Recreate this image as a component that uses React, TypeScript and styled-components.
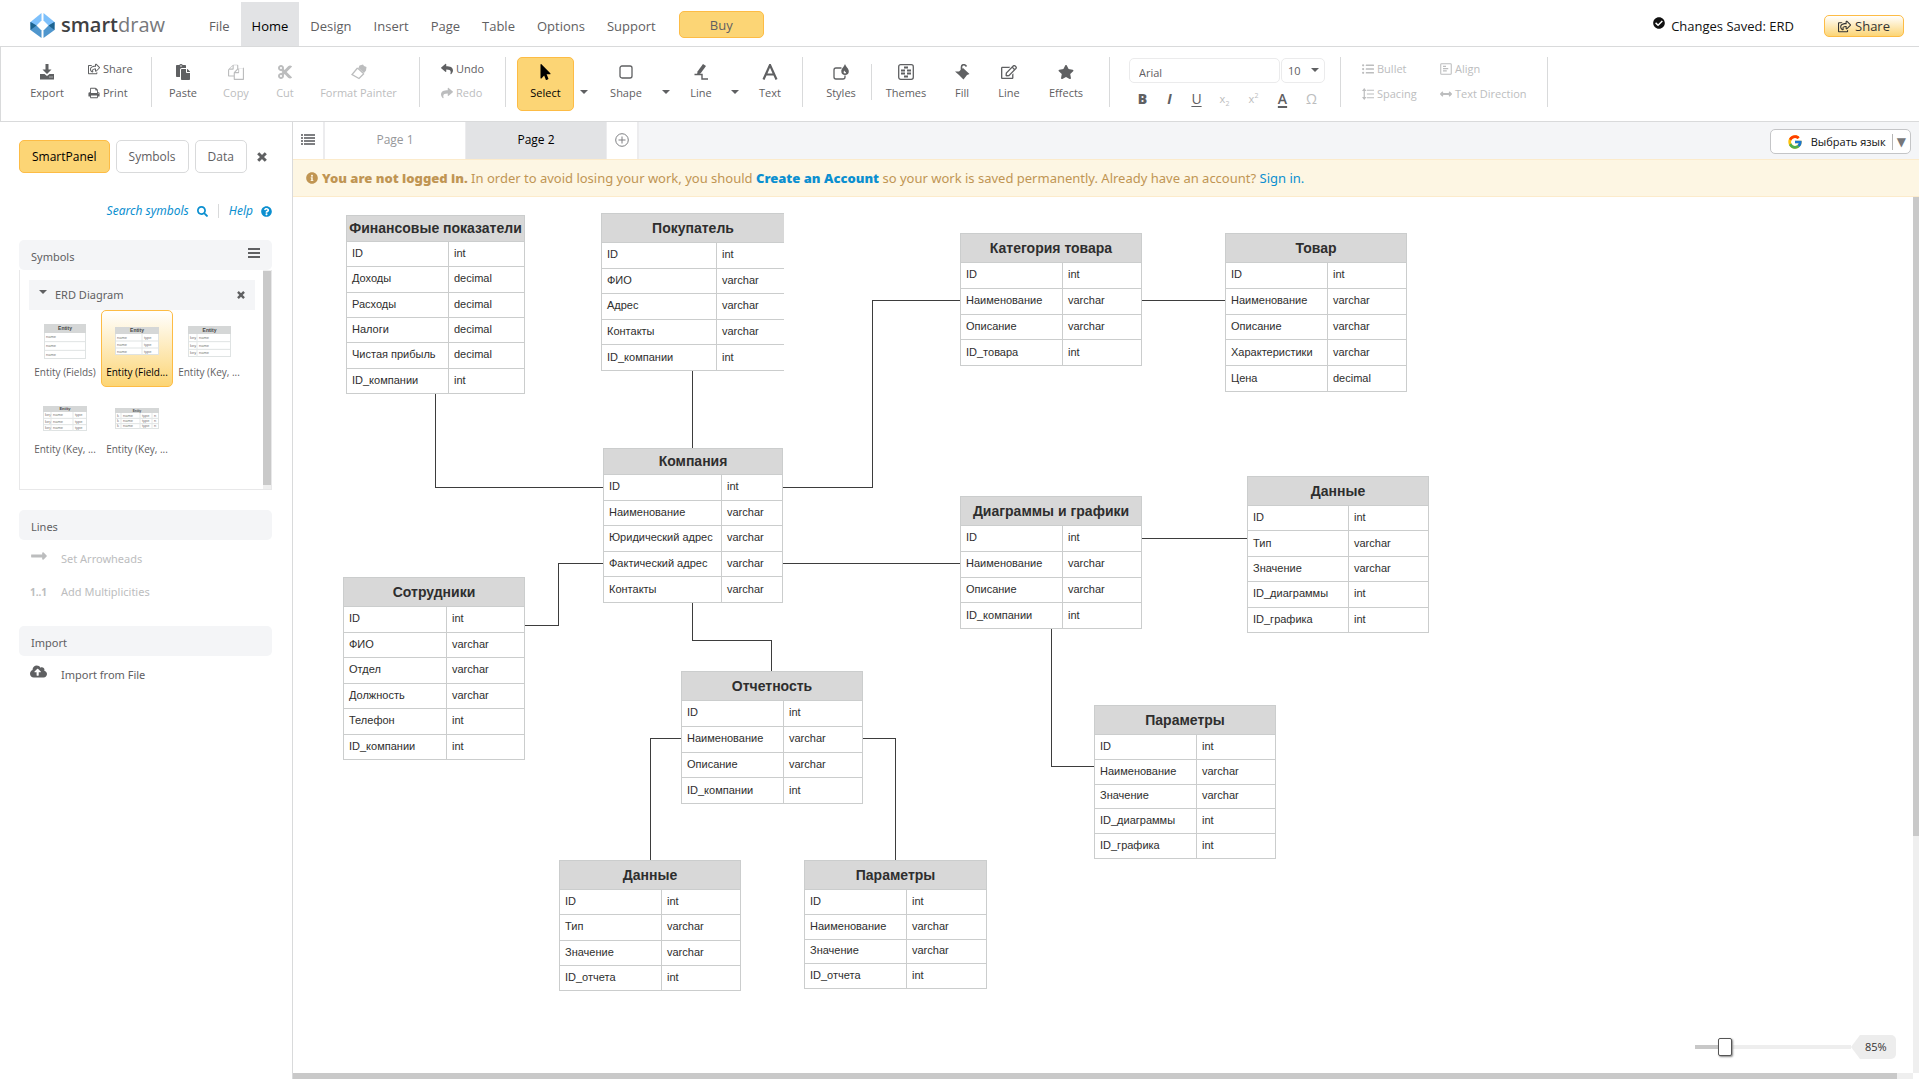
import React, { useState } from "react";
import styled, { createGlobalStyle, css } from "styled-components";
import {
  FaArrowsAltH, FaCheckCircle, FaCloudUploadAlt, FaCut, FaInfoCircle, FaListUl,
  FaLongArrowAltRight, FaMousePointer, FaPaste, FaQuestionCircle, FaRegEdit,
  FaRegShareSquare, FaReply, FaSearch, FaShare, FaStar,
} from "react-icons/fa";
import { FcGoogle } from "react-icons/fc";

const c = {
  text: "#5f6062",
  muted: "#bcbdbe",
  line: "#d9dadb",
  soft: "#f4f5f7",
  active: "#e2e3e5",
  gold: "#fcd575",
  goldEdge: "#fdbc45",
  link: "#0b8fd0",
};

const Global = createGlobalStyle`
  *, *::before, *::after { box-sizing: border-box; }
  body { margin: 0; background: #fff; color: ${c.text}; font: 11px/16px "Open Sans", "Noto Sans", sans-serif; }
  button, input, select { font: inherit; color: inherit; margin: 0; }
  button { background: none; border: 0; padding: 0; cursor: pointer; }
  a { color: ${c.link}; text-decoration: none; }
`;

const Shell = styled.div`
  display: flex;
  flex-direction: column;
  height: 100vh;
`;

/* ---------- top bar ---------- */
const TopBar = styled.header`
  display: flex;
  align-items: flex-start;
  height: 47px;
  padding: 2px 15px 0 30px;
  border-bottom: 1px solid ${c.line};
  font-size: 13px;
  line-height: 18px;
`;
const Logo = styled.a`
  display: flex;
  align-items: center;
  gap: 6px;
  width: 168px;
  height: 46px;
  font-size: 20px;
  line-height: 24px;
  color: #77787b;
  b { font-weight: 600; color: #3f4042; }
`;
const Menu = styled.nav`
  display: flex;
`;
const MenuItem = styled.button<{ $on?: boolean }>`
  height: 44px;
  padding: 4px 11px 0;
  ${(p) => p.$on && css`background: ${c.active}; color: #000;`}
`;
const Buy = styled.button`
  width: 85px;
  height: 27px;
  margin: 9px 0 0 12px;
  border: 1px solid ${c.goldEdge};
  border-radius: 5px;
  background: ${c.gold};
`;
const Saved = styled.div`
  display: flex;
  align-items: center;
  gap: 6px;
  margin: 15px 30px 0 auto;
  color: #111;
  svg { margin-bottom: 6px; }
`;
const ShareButton = styled.button`
  display: flex;
  align-items: center;
  justify-content: center;
  gap: 4px;
  width: 80px;
  height: 22px;
  margin-top: 13px;
  border: 1px solid ${c.goldEdge};
  border-radius: 5px;
  background: linear-gradient(#fff, ${c.gold});
  color: #333;
`;

/* ---------- toolbar ---------- */
const Toolbar = styled.div`
  display: flex;
  height: 75px;
  padding: 10px 0 0 14px;
  border-left: 1px solid ${c.line};
  border-bottom: 1px solid ${c.line};
`;
const Tool = styled.button<{ $w: number; $off?: boolean; $on?: boolean }>`
  display: flex;
  flex-direction: column;
  align-items: center;
  flex: none;
  width: ${(p) => p.$w}px;
  height: 54px;
  padding-top: 7px;
  color: ${(p) => (p.$off ? c.muted : c.text)};
  white-space: nowrap;
  svg { height: 16px; margin-bottom: 5px; }
  ${(p) => p.$on && css`
    padding-top: 6px;
    border: 1px solid ${c.goldEdge};
    border-radius: 5px;
    background: ${c.gold};
    color: #000;
  `}
`;
const CaretButton = styled.button<{ $w: number }>`
  flex: none;
  display: flex;
  justify-content: center;
  align-items: center;
  width: ${(p) => p.$w}px;
  height: 54px;
  padding-top: 16px;
`;
const Caret = styled.span`
  border: 4px solid transparent;
  border-top-color: currentColor;
  border-bottom: 0;
`;
const Rule = styled.span<{ $before?: number; $after?: number; $short?: boolean }>`
  flex: none;
  width: 1px;
  height: ${(p) => (p.$short ? 36 : 50)}px;
  margin: ${(p) => (p.$short ? 7 : 0)}px ${(p) => p.$after ?? 0}px 0 ${(p) => p.$before ?? 0}px;
  background: ${c.line};
`;
const Stack = styled.div<{ $w: number; $pad: number }>`
  flex: none;
  display: flex;
  flex-direction: column;
  gap: 8px;
  width: ${(p) => p.$w}px;
  padding: 4px 0 0 ${(p) => p.$pad}px;
`;
const SmallTool = styled.button<{ $off?: boolean }>`
  display: flex;
  align-items: center;
  gap: 3px;
  height: 16px;
  color: ${(p) => (p.$off ? c.muted : c.text)};
  white-space: nowrap;
  svg { width: 12px; height: 12px; }
`;
const ParagraphTools = styled.div`
  display: grid;
  grid-template-columns: 78px 107px;
  grid-auto-rows: 16px;
  row-gap: 9px;
  padding-top: 4px;
`;
const FontBlock = styled.div`
  width: 196px;
`;
const FontRow = styled.div`
  display: flex;
  gap: 1px;
  padding-top: 1px;
`;
const FontInput = styled.input`
  width: 151px;
  height: 25px;
  padding: 4px 9px 0;
  border: 1px solid #ebebec;
  border-radius: 5px;
`;
const SizeBox = styled.label`
  position: relative;
  width: 44px;
  height: 25px;
  ${Caret} { position: absolute; right: 6px; top: 10px; pointer-events: none; }
`;
const SizeSelect = styled.select`
  appearance: none;
  width: 100%;
  height: 100%;
  padding: 0 6px;
  border: 1px solid #ebebec;
  border-radius: 5px;
  background: none;
`;
const StyleRow = styled.div`
  display: grid;
  grid-template-columns: repeat(3, 27px) repeat(4, 29px);
  height: 24px;
  margin-top: 4px;
`;
const StyleButton = styled.button<{ $off?: boolean; $kind?: "bold" | "italic" | "under" | "color" | "omega" }>`
  color: ${(p) => (p.$off ? c.muted : c.text)};
  font-size: ${(p) => (p.$kind ? 14 : 11)}px;
  line-height: 24px;
  ${(p) => p.$kind === "bold" && css`font-weight: 800;`}
  ${(p) => p.$kind === "italic" && css`font-style: italic; font-weight: 700;`}
  ${(p) => p.$kind === "under" && css`text-decoration: underline; text-underline-offset: 2px;`}
  ${(p) => p.$kind === "color" && css`font-weight: 600; text-decoration: underline 2px; text-underline-offset: 2px;`}
  sub, sup { font-size: 7px; line-height: 0; }
`;

/* ---------- side panel ---------- */
const Body = styled.div`
  flex: 1;
  display: flex;
  min-height: 0;
`;
const Side = styled.aside`
  flex: none;
  width: 293px;
  padding: 18px 20px 0 19px;
  border-right: 1px solid ${c.line};
  font-family: "Noto Sans", "Open Sans", sans-serif;
`;
const SideTabs = styled.div`
  display: flex;
  align-items: center;
  gap: 6px;
  margin-bottom: 29px;
  font-family: "Open Sans", sans-serif;
`;
const SideTab = styled.button<{ $on?: boolean }>`
  height: 33px;
  padding: 0 12px;
  border: 1px solid ${(p) => (p.$on ? c.goldEdge : c.line)};
  border-radius: 5px;
  background: ${(p) => (p.$on ? c.gold : "#fff")};
  color: ${(p) => (p.$on ? "#000" : c.text)};
  font-size: 12px;
`;
const CloseButton = styled.button`
  display: flex;
  margin-left: 4px;
`;
const SearchRow = styled.div`
  display: flex;
  align-items: center;
  justify-content: flex-end;
  height: 18px;
  margin-bottom: 20px;
  font-size: 12px;
  font-style: italic;
  a { display: flex; align-items: center; gap: 8px; }
  a:first-child { margin-right: 10px; }
  a:last-child { padding-left: 10px; border-left: 1px solid ${c.line}; line-height: 14px; }
`;
const SideHead = styled.h2`
  display: flex;
  align-items: center;
  justify-content: space-between;
  height: 30px;
  margin: 0;
  padding: 4px 12px 0;
  border-radius: 5px;
  background: ${c.soft};
  font-size: 11px;
  font-weight: 400;
  svg { margin-bottom: 8px; }
`;
const Library = styled.div`
  display: flex;
  height: 220px;
  margin-bottom: 20px;
  border: 1px solid #e8e8e9;
  border-top: 0;
`;
const LibraryBody = styled.div`
  flex: 1;
  padding: 10px 8px 0 9px;
`;
const LibraryHead = styled.div`
  display: flex;
  align-items: center;
  gap: 8px;
  height: 30px;
  padding: 0 10px;
  background: ${c.soft};
  span + span { flex: 1; }
  ${Caret} { margin-bottom: 6px; }
`;
const BarTrack = styled.div`
  width: 8px;
  padding-top: 1px;
  background: #efefef;
`;
const BarThumb = styled.div<{ $size: string; $side?: boolean }>`
  ${(p) => (p.$side ? `width: ${p.$size}; height: 100%;` : `height: ${p.$size};`)}
  background: #c9c9c9;
`;
const Tiles = styled.div`
  display: grid;
  grid-template-columns: repeat(3, 72px);
`;
const Tile = styled.button<{ $on?: boolean }>`
  display: flex;
  flex-direction: column;
  align-items: center;
  height: 77px;
  border: 1px solid ${(p) => (p.$on ? c.goldEdge : "transparent")};
  border-radius: 5px;
  background: ${(p) => (p.$on ? `linear-gradient(#fff, ${c.gold})` : "none")};
  color: ${(p) => (p.$on ? "#000" : c.text)};
  font-family: "Open Sans", sans-serif;
  font-size: 10px;
  line-height: 14px;
  white-space: nowrap;
`;
const ThumbBox = styled.span`
  display: flex;
  align-items: center;
  height: 54px;
  padding-top: 6px;
`;
const Actions = styled.div`
  padding: 2px 11px 18px;
`;
const Action = styled.button<{ $off?: boolean }>`
  display: grid;
  grid-template-columns: 31px auto;
  align-items: center;
  height: 33px;
  text-align: left;
  color: ${(p) => (p.$off ? c.muted : c.text)};
  svg { margin-bottom: 6px; }
  b { font-size: 10px; }
`;

/* ---------- workspace ---------- */
const Work = styled.main`
  flex: 1;
  display: flex;
  flex-direction: column;
  min-width: 0;
`;
const Tabs = styled.div`
  display: flex;
  height: 37px;
  background: ${c.soft};
`;
const Tab = styled.button<{ $on?: boolean }>`
  width: 141px;
  padding-bottom: 2px;
  border-right: 1px solid #ececee;
  background: ${(p) => (p.$on ? c.active : "#fff")};
  color: ${(p) => (p.$on ? "#000" : "#96979a")};
  font-size: 12px;
`;
const TabIcon = styled.button`
  display: flex;
  align-items: center;
  justify-content: center;
  width: 32px;
  padding-bottom: 2px;
  border-right: 2px solid #ececee;
  background: #fff;
  color: #7e7f82;
`;
const Language = styled.button`
  display: flex;
  align-items: center;
  justify-content: flex-end;
  width: 141px;
  height: 25px;
  margin: 7px 8px 0 auto;
  padding: 0 4px 0 0;
  border: 1px solid #c4c5c7;
  border-radius: 5px;
  background: #fff;
  color: #111;
  svg { margin-right: 8px; }
  i { height: 16px; margin-left: 6px; padding-left: 4px; border-left: 1px solid #b5b5b5; color: #76777a; font: 12px/16px "DejaVu Sans", sans-serif; }
`;
const Banner = styled.p`
  display: flex;
  align-items: center;
  gap: 4px;
  height: 38px;
  margin: 0;
  padding: 0 13px;
  border: solid #fcebcb;
  border-width: 1px 0;
  background: #fdf6e3;
  color: #c09553;
  font-family: "Noto Sans", "Open Sans", sans-serif;
  font-size: 13px;
  white-space: pre;
  strong { font-weight: 900; }
`;
const Stage = styled.div`
  position: relative;
  flex: 1;
  display: grid;
  grid-template: 1fr 6px / 1fr 6px;
  min-height: 0;
`;
const Canvas = styled.div`
  position: relative;
  overflow: hidden;
  background: #fff;
`;
const Scroll = styled.div`
  background: #efefef;
`;
const Wires = styled.svg`
  position: absolute;
  inset: 0;
  width: 100%;
  height: 100%;
  fill: none;
  stroke: #3d3d3d;
  shape-rendering: crispEdges;
`;
const EntityTable = styled.table<{ $x: number; $y: number; $w: number; $h: number; $open?: boolean }>`
  position: absolute;
  left: ${(p) => p.$x}px;
  top: ${(p) => p.$y}px;
  width: ${(p) => p.$w}px;
  height: ${(p) => p.$h}px;
  border-collapse: collapse;
  table-layout: fixed;
  background: #fff;
  color: #2e2e2e;
  font: 11px/14px "Liberation Sans", Arial, sans-serif;
  th, td { padding: 0 0 2px 5px; border: 1px solid #cbcdcd; text-align: left; white-space: nowrap; }
  ${(p) => p.$open && css`th, td:last-child { border-right: 0; }`}
`;
const EntityTitle = styled.th<{ $h: number }>`
  && { height: ${(p) => p.$h}px; padding: 0 0 1px; background: #d8d8d8; text-align: center; font-size: 14px; line-height: 16px; }
`;
const Zoom = styled.div`
  position: absolute;
  right: 23px;
  bottom: 20px;
  display: flex;
  align-items: center;
`;
const ZoomRange = styled.input`
  appearance: none;
  width: 156px;
  height: 18px;
  background: linear-gradient(to right, #c8c8c8 24px, #eee 24px) center / 100% 4px no-repeat;
  &::-webkit-slider-thumb {
    appearance: none;
    width: 14px;
    height: 18px;
    border: 1px solid #555;
    border-radius: 2px;
    background: #fff;
    box-shadow: 1px 1px 2px #888;
  }
`;
const ZoomValue = styled.output`
  width: 45px;
  padding: 0 0 0 14px;
  border-radius: 0 5px 5px 0;
  background: #ededed;
  clip-path: polygon(0 50%, 20% 0, 100% 0, 100% 100%, 20% 100%);
  color: #333;
  font-size: 11px;
  line-height: 24px;
`;

/* ---------- drawings ---------- */
const svg = { width: 16, height: 16, viewBox: "0 0 16 16", fill: "currentColor" };

const LogoMark = () => (
  <svg width="25" height="25" viewBox="0 0 25 25">
    <path d="M11.500 0v7.500L6.500 12.500H.500V9z" fill="#7dc0fb" />
    <path d="M13.500 0v7.500l5 5h6V9z" fill="#7dc0fb" />
    <path d="M.500 9v8l11 8v-7.500l-5-5z" fill="#4f96cd" />
    <path d="M24.500 9v8l-11 8v-7.500l5-5z" fill="#4f96cd" />
    <path d="M.500 9l6 3.500L.500 17zM24.500 9l-6 3.500 6 4.500z" fill="#1c6390" />
  </svg>
);
const ExportIcon = () => (
  <svg {...svg}><path d="M6.500 0h3v5.500h3L8 10 3.500 5.500h3zM1 10h4.500l2.500 2 2.500-2H15v5.500H1zM10.500 12.500v1h1v-1zM12.500 12.500v1h1v-1z" fillRule="evenodd" /></svg>
);
const PrintIcon = () => (
  <svg {...svg} viewBox="0 0 1792 1792"><path d="M448 1536h896v-256H448v256zm0-640h896V512h-160q-40 0-68-28t-28-68V256H448v640zm1152 64q0-26-19-45t-45-19-45 19-19 45 19 45 45 19 45-19 19-45zm128 0v416q0 13-9.500 22.500t-22.500 9.500h-224v160q0 40-28 68t-68 28H416q-40 0-68-28t-28-68v-160H96q-13 0-22.500-9.500T64 1376V960q0-79 56.500-135.500T256 768h64V224q0-40 28-68t68-28h672q40 0 88 20t76 48l152 152q28 28 48 76t20 88v256h64q79 0 135.500 56.500T1728 960z" /></svg>
);
const CopyIcon = () => (
  <svg {...svg} viewBox="0 0 1792 1792"><path d="M1696 384q40 0 68 28t28 68v1216q0 40-28 68t-68 28H736q-40 0-68-28t-28-68v-288H96q-40 0-68-28t-28-68V736q0-40 20-88t48-76l408-408q28-28 76-48t88-20h416q40 0 68 28t28 68v328q68-40 128-40h416zm-544 213L853 896h299V597zM512 213L213 512h299V213zm196 647l316-316V128H640v416q0 40-28 68t-68 28H128v640h512v-256q0-40 20-88t48-76zm956 804V512h-416v416q0 40-28 68t-68 28H768v640h896z" /></svg>
);
const PainterIcon = () => (
  <svg {...svg}><path d="M8.500 1.500L12 .500l1 1.500 2.500 1-.5 3.500-2 2.500-5.500-5z" /><path d="M6.500 4L1 10.500 8 14.500 13 9.500 M6.500 4L12.500 9.500" fill="none" stroke="currentColor" strokeWidth="1.300" /></svg>
);
const ShapeIcon = () => (
  <svg {...svg}><rect x="2" y="2" width="12" height="12" rx="2" fill="none" stroke="currentColor" strokeWidth="1.300" /></svg>
);
const PencilLineIcon = () => (
  <svg {...svg}><path d="M10 0l3 2-5.500 7.500L4 11l.5-3.500z" /><path d="M1.500 10.500H9V15h6" fill="none" stroke="currentColor" strokeWidth="1.400" /></svg>
);
const LetterIcon = () => (
  <svg {...svg}><path d="M1.500 15.500L8 1l6.500 14.500M4 10.500h8" fill="none" stroke="currentColor" strokeWidth="2.200" /></svg>
);
const StylesIcon = () => (
  <svg {...svg}><path d="M8.500 4H3a2 2 0 0 0-2 2v7a2 2 0 0 0 2 2h7a2 2 0 0 0 2-2v-1.500" fill="none" stroke="currentColor" strokeWidth="1.300" /><path d="M12 0c1 3 3.800 4.500 3.800 7.300a3.700 3.700 0 0 1-7.500 0C8.300 4.500 11 3 12 0zm-.5 6.500c-1.500 1-1 3 .7 3 1 0 1-1.200.3-1.500s-.8-.8-1-1.500z" fillRule="evenodd" /></svg>
);
const ThemesIcon = () => (
  <svg {...svg}><rect x=".7" y=".7" width="14.600" height="14.600" rx="2" fill="none" stroke="currentColor" strokeWidth="1.300" /><path d="M6 2.500h4v2H6zM3 5.500h4v2H3zM9 5.500h4v2H9zM3 8.500h4v2H3zM9 8.500h4v2H9zM6 11.500h4v2H6z" /></svg>
);
const FillIcon = () => (
  <svg {...svg}><path d="M1 7.500h4L9 4l6.500 6-2.500 1-3.500 4.500L5 11z" /><path d="M12.500 2.500C11 0 7.500 0 7.500 3v4.500" fill="none" stroke="currentColor" strokeWidth="1.600" /></svg>
);
const AlignIcon = () => (
  <svg {...svg}><rect x="1" y="1" width="14" height="14" rx="1" fill="none" stroke="currentColor" strokeWidth="1.400" /><path d="M4 4.500h4M4 7.500h7M4 10.500h5" stroke="currentColor" strokeWidth="1.600" /></svg>
);
const SpacingIcon = () => (
  <svg {...svg}><path d="M3 2.500v11M6.500 3H16M6.500 8H16M6.500 13H16" stroke="currentColor" strokeWidth="1.600" /><path d="M0 4l3-4 3 4zM0 12l3 4 3-4z" /></svg>
);
const PageListIcon = () => (
  <svg width="14" height="11" viewBox="0 0 14 11" fill="currentColor"><path d="M0 0h2v2H0zM3 0h11v2H3zM0 3h2v2H0zM3 3h11v2H3zM0 6h2v2H0zM3 6h11v2H3zM0 9h2v2H0zM3 9h11v2H3z" /></svg>
);
const CrossIcon = ({ size }: { size: number }) => (
  <svg width={size} height={size} viewBox="0 0 10 10" stroke="currentColor" strokeWidth="3"><path d="M1.200 1.200l7.600 7.600M8.800 1.200L1.200 8.800" /></svg>
);
const PlusIcon = () => (
  <svg width="14" height="14" viewBox="0 0 14 14" fill="none" stroke="currentColor"><circle cx="7" cy="7" r="6.300" /><path d="M7 3.500v7M3.500 7h7" /></svg>
);
const MenuIcon = () => (
  <svg width="12" height="10" viewBox="0 0 12 10" fill="currentColor"><path d="M0 0h12v2H0zM0 4h12v2H0zM0 8h12v2H0z" /></svg>
);

type ThumbProps = { w: number; h: number; head: number; cols: { x: number; label: string }[] };
const EntityThumb = ({ w, h, head, cols }: ThumbProps) => {
  const row = (h - head) / 3;
  const titleSize = Math.min(5, head - 2);
  return (
    <svg width={w} height={h} viewBox={`0 0 ${w} ${h}`} fontFamily="Liberation Sans, sans-serif" fontSize="4" fill="#777">
      <rect x=".5" y=".5" width={w - 1} height={h - 1} fill="#fff" stroke="#dfe3e3" />
      <rect width={w} height={head} fill="#d5d7d7" />
      <text x={w / 2} y={head / 2 + titleSize / 3} textAnchor="middle" fontWeight="700" fontSize={titleSize} fill="#444">Entity</text>
      {[0, 1, 2].map((r) => (
        <g key={r}>
          {r > 0 && <path d={`M0 ${head + row * r}H${w}`} stroke="#dfe3e3" />}
          {cols.map((col) => (
            <text key={col.x} x={col.x + 2} y={head + row * (r + 1) - row / 2 + 1}>{col.label}</text>
          ))}
        </g>
      ))}
      {cols.slice(1).map((col) => <path key={col.x} d={`M${col.x} ${head}V${h}`} stroke="#e4e7e7" />)}
    </svg>
  );
};

/* ---------- data ---------- */
const thumbs: { label: string; on?: boolean; thumb: ThumbProps }[] = [
  { label: "Entity (Fields)", thumb: { w: 42, h: 35, head: 9, cols: [{ x: 0, label: "name" }] } },
  { label: "Entity (Field...", on: true, thumb: { w: 44, h: 28, head: 7, cols: [{ x: 0, label: "name" }, { x: 27, label: "type" }] } },
  { label: "Entity (Key, ...", thumb: { w: 43, h: 31, head: 8, cols: [{ x: 0, label: "key" }, { x: 9, label: "name" }] } },
  { label: "Entity (Key, ...", thumb: { w: 44, h: 25, head: 6, cols: [{ x: 0, label: "key" }, { x: 8, label: "name" }, { x: 30, label: "type" }] } },
  { label: "Entity (Key, ...", thumb: { w: 44, h: 21, head: 5, cols: [{ x: 0, label: "k" }, { x: 6, label: "name" }, { x: 25, label: "type" }, { x: 37, label: "n" }] } },
];

type Entity = { title: string; x: number; y: number; w: number; h: number; head: number; split: number; open?: boolean; rows: [string, string][] };
const entities: Entity[] = [
  { title: "Финансовые показатели", x: 53, y: 18, w: 179, h: 179, head: 26, split: 102, rows: [["ID", "int"], ["Доходы", "decimal"], ["Расходы", "decimal"], ["Налоги", "decimal"], ["Чистая прибыль", "decimal"], ["ID_компании", "int"]] },
  { title: "Покупатель", x: 308, y: 16, w: 183, h: 158, head: 29, split: 115, open: true, rows: [["ID", "int"], ["ФИО", "varchar"], ["Адрес", "varchar"], ["Контакты", "varchar"], ["ID_компании", "int"]] },
  { title: "Категория товара", x: 667, y: 36, w: 182, h: 133, head: 29, split: 102, rows: [["ID", "int"], ["Наименование", "varchar"], ["Описание", "varchar"], ["ID_товара", "int"]] },
  { title: "Товар", x: 932, y: 36, w: 182, h: 159, head: 29, split: 102, rows: [["ID", "int"], ["Наименование", "varchar"], ["Описание", "varchar"], ["Характеристики", "varchar"], ["Цена", "decimal"]] },
  { title: "Компания", x: 310, y: 251, w: 180, h: 155, head: 26, split: 118, rows: [["ID", "int"], ["Наименование", "varchar"], ["Юридический адрес", "varchar"], ["Фактический адрес", "varchar"], ["Контакты", "varchar"]] },
  { title: "Сотрудники", x: 50, y: 380, w: 182, h: 183, head: 29, split: 103, rows: [["ID", "int"], ["ФИО", "varchar"], ["Отдел", "varchar"], ["Должность", "varchar"], ["Телефон", "int"], ["ID_компании", "int"]] },
  { title: "Отчетность", x: 388, y: 474, w: 182, h: 133, head: 29, split: 102, rows: [["ID", "int"], ["Наименование", "varchar"], ["Описание", "varchar"], ["ID_компании", "int"]] },
  { title: "Данные", x: 266, y: 663, w: 182, h: 131, head: 29, split: 102, rows: [["ID", "int"], ["Тип", "varchar"], ["Значение", "varchar"], ["ID_отчета", "int"]] },
  { title: "Параметры", x: 511, y: 663, w: 183, h: 129, head: 29, split: 102, rows: [["ID", "int"], ["Наименование", "varchar"], ["Значение", "varchar"], ["ID_отчета", "int"]] },
  { title: "Диаграммы и графики", x: 667, y: 299, w: 182, h: 133, head: 29, split: 102, rows: [["ID", "int"], ["Наименование", "varchar"], ["Описание", "varchar"], ["ID_компании", "int"]] },
  { title: "Данные", x: 954, y: 279, w: 182, h: 157, head: 29, split: 101, rows: [["ID", "int"], ["Тип", "varchar"], ["Значение", "varchar"], ["ID_диаграммы", "int"], ["ID_графика", "int"]] },
  { title: "Параметры", x: 801, y: 508, w: 182, h: 154, head: 29, split: 102, rows: [["ID", "int"], ["Наименование", "varchar"], ["Значение", "varchar"], ["ID_диаграммы", "int"], ["ID_графика", "int"]] },
];
const wires =
  "M142 196V290H310 M399 173V251 M490 290H579V103H667 M849 103H932 M310 366H265V428H232 M490 366H667 " +
  "M399 405V443H478V474 M388 541H357V663 M570 541H602V663 M849 341H954 M758 431V569H801";

const menu = ["File", "Home", "Design", "Insert", "Page", "Table", "Options", "Support"];

export default function App() {
  const [zoom, setZoom] = useState(85);
  return (
    <Shell>
      <Global />
      <TopBar>
        <Logo href="#"><LogoMark /><span><b>smart</b>draw</span></Logo>
        <Menu>{menu.map((m) => <MenuItem key={m} $on={m === "Home"}>{m}</MenuItem>)}</Menu>
        <Buy>Buy</Buy>
        <Saved><FaCheckCircle size={12} />Changes Saved: ERD</Saved>
        <ShareButton><FaRegShareSquare size={13} />Share</ShareButton>
      </TopBar>

      <Toolbar>
        <Tool $w={64}><ExportIcon />Export</Tool>
        <Stack $w={72} $pad={9}>
          <SmallTool><FaRegShareSquare />Share</SmallTool>
          <SmallTool><PrintIcon />Print</SmallTool>
        </Stack>
        <Rule />
        <Tool $w={62}><FaPaste size={16} />Paste</Tool>
        <Tool $w={44} $off><CopyIcon />Copy</Tool>
        <Tool $w={54} $off><FaCut size={16} />Cut</Tool>
        <Tool $w={93} $off><PainterIcon />Format Painter</Tool>
        <Rule $before={14} />
        <Stack $w={85} $pad={21}>
          <SmallTool><FaReply />Undo</SmallTool>
          <SmallTool $off><FaShare />Redo</SmallTool>
        </Stack>
        <Rule $after={11} />
        <Tool $w={57} $on><FaMousePointer size={17} />Select</Tool>
        <CaretButton $w={20} aria-label="Select options"><Caret /></CaretButton>
        <Tool $w={64}><ShapeIcon />Shape</Tool>
        <CaretButton $w={16} aria-label="Shape options"><Caret /></CaretButton>
        <Tool $w={54}><PencilLineIcon />Line</Tool>
        <CaretButton $w={14} aria-label="Line options"><Caret /></CaretButton>
        <Tool $w={56}><LetterIcon />Text</Tool>
        <Rule $before={4} $after={8} />
        <Tool $w={60}><StylesIcon />Styles</Tool>
        <Rule $short />
        <Tool $w={68}><ThemesIcon />Themes</Tool>
        <Tool $w={44}><FillIcon />Fill</Tool>
        <Tool $w={50}><FaRegEdit size={16} />Line</Tool>
        <Tool $w={64}><FaStar size={16} />Effects</Tool>
        <Rule $before={11} $after={19} />
        <FontBlock>
          <FontRow>
            <FontInput aria-label="Font" defaultValue="Arial" />
            <SizeBox>
              <SizeSelect aria-label="Font size" defaultValue="10"><option>10</option><option>12</option></SizeSelect>
              <Caret />
            </SizeBox>
          </FontRow>
          <StyleRow>
            <StyleButton $kind="bold">B</StyleButton>
            <StyleButton $kind="italic">I</StyleButton>
            <StyleButton $kind="under">U</StyleButton>
            <StyleButton $off>x<sub>2</sub></StyleButton>
            <StyleButton $off>x<sup>2</sup></StyleButton>
            <StyleButton $kind="color">A</StyleButton>
            <StyleButton $kind="omega" $off>Ω</StyleButton>
          </StyleRow>
        </FontBlock>
        <Rule $before={15} $after={21} />
        <ParagraphTools>
          <SmallTool $off><FaListUl />Bullet</SmallTool>
          <SmallTool $off><AlignIcon />Align</SmallTool>
          <SmallTool $off><SpacingIcon />Spacing</SmallTool>
          <SmallTool $off><FaArrowsAltH />Text Direction</SmallTool>
        </ParagraphTools>
        <Rule />
      </Toolbar>

      <Body>
        <Side>
          <SideTabs>
            <SideTab $on>SmartPanel</SideTab>
            <SideTab>Symbols</SideTab>
            <SideTab>Data</SideTab>
            <CloseButton aria-label="Close panel"><CrossIcon size={10} /></CloseButton>
          </SideTabs>
          <SearchRow>
            <a href="#">Search symbols<FaSearch size={11} /></a>
            <a href="#">Help<FaQuestionCircle size={11} /></a>
          </SearchRow>
          <SideHead>Symbols<MenuIcon /></SideHead>
          <Library>
            <LibraryBody>
              <LibraryHead><Caret /><span>ERD Diagram</span><CrossIcon size={8} /></LibraryHead>
              <Tiles>
                {thumbs.map((t, i) => (
                  <Tile key={i} $on={t.on}><ThumbBox><EntityThumb {...t.thumb} /></ThumbBox>{t.label}</Tile>
                ))}
              </Tiles>
            </LibraryBody>
            <BarTrack><BarThumb $size="98%" /></BarTrack>
          </Library>
          <SideHead>Lines</SideHead>
          <Actions>
            <Action $off><FaLongArrowAltRight size={18} />Set Arrowheads</Action>
            <Action $off><b>1..1</b>Add Multiplicities</Action>
          </Actions>
          <SideHead>Import</SideHead>
          <Actions>
            <Action><FaCloudUploadAlt size={17} />Import from File</Action>
          </Actions>
        </Side>

        <Work>
          <Tabs>
            <TabIcon aria-label="Page list"><PageListIcon /></TabIcon>
            <Tab>Page 1</Tab>
            <Tab $on>Page 2</Tab>
            <TabIcon aria-label="Add page"><PlusIcon /></TabIcon>
            <Language><FcGoogle size={16} />Выбрать язык<i>▼</i></Language>
          </Tabs>
          <Banner>
            <FaInfoCircle size={12} />
            <span><strong>You are not logged in.</strong> In order to avoid losing your work, you should <a href="#"><strong>Create an Account</strong></a> so your work is saved permanently. Already have an account? <a href="#">Sign in.</a></span>
          </Banner>
          <Stage>
            <Canvas>
              <Wires><path d={wires} /></Wires>
              {entities.map((e, i) => (
                <EntityTable key={i} $x={e.x} $y={e.y} $w={e.w} $h={e.h} $open={e.open}>
                  <colgroup><col width={e.split} /><col /></colgroup>
                  <thead><tr><EntityTitle colSpan={2} $h={e.head}>{e.title}</EntityTitle></tr></thead>
                  <tbody>
                    {e.rows.map(([name, type]) => <tr key={name}><td>{name}</td><td>{type}</td></tr>)}
                  </tbody>
                </EntityTable>
              ))}
            </Canvas>
            <Scroll><BarThumb $size="73%" /></Scroll>
            <Scroll><BarThumb $side $size="99%" /></Scroll>
            <Zoom>
              <ZoomRange type="range" aria-label="Zoom" min={25} max={400} value={zoom} onChange={(e) => setZoom(Number(e.target.value))} />
              <ZoomValue>{zoom}%</ZoomValue>
            </Zoom>
          </Stage>
        </Work>
      </Body>
    </Shell>
  );
}
